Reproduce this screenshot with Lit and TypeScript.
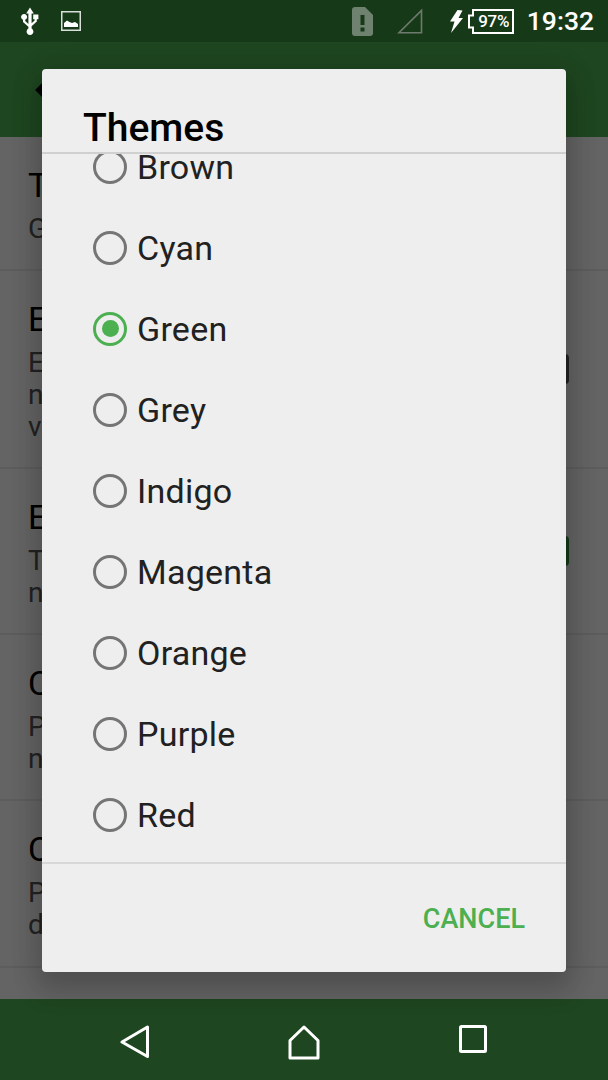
import { LitElement, html, css } from "lit";
import { customElement } from "lit/decorators.js";

const THEMES = ["Brown", "Cyan", "Green", "Grey", "Indigo", "Magenta", "Orange", "Purple", "Red"];
const SELECTED = "Green";

const ROWS = [
  { h: 134, title: "Theme", sub: ["Green"], toggle: "" },
  { h: 198, title: "Enable notifications", sub: ["Enable notifications when a", "new message arrives on this", "volume"], toggle: "off" },
  { h: 166, title: "Enable sounds", sub: ["Turn on sound for", "notifications"], toggle: "on" },
  { h: 166, title: "Check for updates", sub: ["Periodically check for", "new versions"], toggle: "" },
  { h: 167, title: "Clear cache", sub: ["Purge stored files and", "downloaded data"], toggle: "" },
];

@customElement("app-root")
export class AppRoot extends LitElement {
  static styles = css`
    :host { display: block; width: 608px; height: 1080px; overflow: hidden; font-family: Roboto, "Noto Sans", sans-serif; }
    .page { display: flex; flex-direction: column; height: 1080px; }

    .status { height: 42px; flex: none; background: #163918; display: flex; align-items: center; padding: 0 14px 0 20px; color: #fff; }
    .status svg { display: block; flex: none; }
    .usb { margin-right: 21px; }
    .spacer { flex: 1; }
    .sim { margin-right: 24px; }
    .signal { margin-right: 27px; }
    .bolt { margin-right: 4px; }
    .battery { position: relative; width: 47px; height: 25px; margin-right: 13px; }
    .battery span { position: absolute; left: 9px; right: 2px; top: 0; bottom: 0; display: flex; align-items: center; justify-content: center; font-size: 17px; font-weight: 500; letter-spacing: -0.2px; }
    .time { font-size: 26.5px; font-weight: 500; line-height: 42px; }

    .middle { position: relative; flex: 1; min-height: 0; z-index: 1; display: flex; flex-direction: column; background: #fafafa; }
    .appbar { height: 95px; flex: none; background: #4caf50; display: flex; align-items: center; padding-left: 34px; }
    .list { flex: 1; min-height: 0; overflow: hidden; }
    .row { box-sizing: border-box; border-bottom: 2px solid #e8e8e8; padding: 28px 39px 0 28px; display: flex; justify-content: space-between; align-items: flex-start; }
    .row-title { font-size: 34px; line-height: 40px; margin-bottom: 8px; color: #000; }
    .row-sub { font-size: 28px; line-height: 32px; color: #555; }
    .toggle { width: 68px; height: 30px; border-radius: 4px; flex: none; }
    .toggle.off { background: #555; margin-top: 55px; }
    .toggle.on { background: #388e3c; margin-top: 39px; }

    .scrim { position: absolute; inset: 0; background: rgba(0, 0, 0, 0.6); }
    .dialog { position: absolute; left: 42px; top: 27px; width: 524px; height: 903px; box-sizing: border-box; background: #eeeeee; border-radius: 4px; display: flex; flex-direction: column; overflow: hidden; }
    .shadow { position: absolute; left: 42px; top: 27px; width: 524px; height: 903px; border-radius: 4px; box-shadow: 0 14px 26px 6px rgba(0,0,0,.14), 0 6px 30px 6px rgba(0,0,0,.09); }
    .title { flex: none; height: 85px; box-sizing: border-box; padding: 36px 0 0 41px; font-size: 39px; line-height: 46px; font-weight: 500; color: #000; border-bottom: 2px solid #d0d0d0; overflow: hidden; }
    .options { flex: 1; min-height: 0; overflow: hidden; }
    .options-inner { margin-top: -28px; }
    .option { height: 81px; display: flex; align-items: center; padding-left: 51px; font-size: 34px; letter-spacing: 0.25px; color: #212121; }
    .radio { width: 34px; height: 34px; box-sizing: border-box; border: 3.5px solid #757575; border-radius: 50%; margin-right: 10px; flex: none; display: flex; align-items: center; justify-content: center; }
    .radio.on { border-color: #4caf50; }
    .radio.on::after { content: ""; width: 17px; height: 17px; border-radius: 50%; background: #4caf50; }
    .footer { flex: none; height: 110px; box-sizing: border-box; border-top: 2px solid #d8d8d8; display: flex; align-items: center; justify-content: flex-end; padding: 1px 41px 0 0; }
    .cancel { font-size: 27px; font-weight: 500; color: #4caf50; line-height: 32px; }

    .nav { height: 81px; flex: none; background: #1e4620; display: flex; align-items: center; padding-top: 5px; box-sizing: border-box; }
    .nav-inner { display: flex; width: 100%; justify-content: center; }
    .nav svg { display: block; }
    .navslot { width: 169px; display: flex; justify-content: center; }
  `;

  private statusIcons() {
    return html`
      <svg class="usb" width="20" height="28" viewBox="0 0 20 28" fill="#fff">
        <path d="M10 0.5 L13.8 6.5 H11.6 V16.2 L14.6 13.6 V12.2 H13.2 V7.4 H18.4 V12.2 H16.8 V14.6 L11.6 19.2 V21.6 A3.4 3.4 0 1 1 8.4 21.6 V19.8 L3 15 V12.8 A3 3 0 1 1 5.2 12.8 V14 L8.4 16.9 V6.5 H6.2 Z"/>
      </svg>
      <svg width="20" height="20" viewBox="0 0 20 20">
        <rect x="0.75" y="0.75" width="18.5" height="18.5" fill="none" stroke="#d8dfd8" stroke-width="1.5"/>
        <path d="M3 16 V12 L6 9.5 L8.5 11 L11 12 L14 11 L17 13 V16 Z" fill="#fff"/>
      </svg>
      <div class="spacer"></div>
      <svg class="sim" width="21" height="29" viewBox="0 0 21 29">
        <path d="M3 0 H13 L21 8 V26 A3 3 0 0 1 18 29 H3 A3 3 0 0 1 0 26 V3 A3 3 0 0 1 3 0 Z" fill="#6f8270"/>
        <rect x="8.5" y="8" width="4" height="10" fill="#163918"/>
        <rect x="8.5" y="20.5" width="4" height="4" fill="#163918"/>
      </svg>
      <svg class="signal" width="26" height="26" viewBox="0 0 26 26">
        <path d="M24.5 2.5 V24.8 H2 Z" fill="none" stroke="#6f7a6f" stroke-width="1.6"/>
      </svg>
      <svg class="bolt" width="13" height="23" viewBox="0 0 13 23">
        <path d="M7.5 0 L12.5 0.5 L8.5 8 H13 L1 23 L4.5 11.5 H0 Z" fill="#fff"/>
      </svg>
      <div class="battery">
        <svg width="47" height="25" viewBox="0 0 47 25">
          <path d="M6 1 H46 V24 H6 V18.5 H2 V6.5 H6 Z" fill="none" stroke="#fff" stroke-width="2"/>
        </svg>
        <span>97%</span>
      </div>
      <div class="time">19:32</div>
    `;
  }

  private back() {
    return html`<svg width="26" height="26" viewBox="0 0 26 26">
      <path d="M24 13 H4 M11 5.5 L3.5 13 L11 20.5" fill="none" stroke="#000" stroke-width="3.4"/>
    </svg>`;
  }

  private navIcons() {
    return html`
      <div class="nav-inner">
        <div class="navslot">
          <svg width="30" height="34" viewBox="0 0 30 34">
            <path d="M27.5 2 V31.5 L2 17 Z" fill="none" stroke="#fff" stroke-width="3" stroke-linejoin="round"/>
          </svg>
        </div>
        <div class="navslot">
          <svg width="32" height="35" viewBox="0 0 32 35">
            <path d="M16 2 L30 15.5 V33 H2 V15.5 Z" fill="none" stroke="#fff" stroke-width="3" stroke-linejoin="round"/>
          </svg>
        </div>
        <div class="navslot">
          <svg width="28" height="28" viewBox="0 0 28 28">
            <rect x="1.5" y="1.5" width="25" height="25" rx="1" fill="none" stroke="#fff" stroke-width="3"/>
          </svg>
        </div>
      </div>
    `;
  }

  render() {
    return html`
      <div class="page">
        <div class="status">${this.statusIcons()}</div>
        <div class="middle">
          <div class="appbar">${this.back()}</div>
          <div class="list">
            ${ROWS.map(
              (r) => html`
                <div class="row" style="height:${r.h}px">
                  <div>
                    <div class="row-title">${r.title}</div>
                    ${r.sub.map((l) => html`<div class="row-sub">${l}</div>`)}
                  </div>
                  ${r.toggle ? html`<div class="toggle ${r.toggle}"></div>` : ""}
                </div>
              `
            )}
          </div>
          <div class="scrim"></div>
          <div class="shadow"></div>
          <div class="dialog">
            <div class="title">Themes</div>
            <div class="options">
              <div class="options-inner">
                ${THEMES.map(
                  (t) => html`
                    <div class="option">
                      <div class="radio ${t === SELECTED ? "on" : ""}"></div>
                      <span>${t}</span>
                    </div>
                  `
                )}
              </div>
            </div>
            <div class="footer"><div class="cancel">CANCEL</div></div>
          </div>
        </div>
        <div class="nav">${this.navIcons()}</div>
      </div>
    `;
  }
}
